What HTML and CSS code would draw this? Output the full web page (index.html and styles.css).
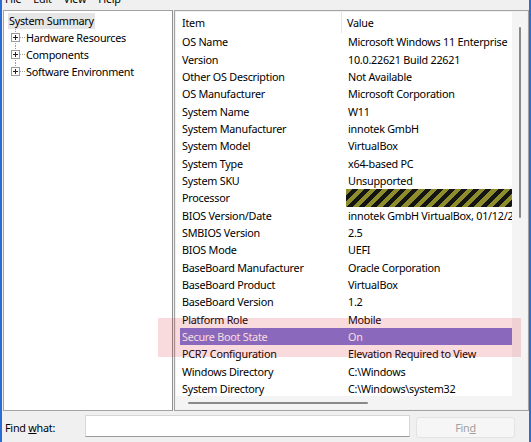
FILE: index.html
```html
<!DOCTYPE html>
<html>
<head>
<meta charset="utf-8">
<link rel="stylesheet" href="styles.css">
</head>
<body>
<div class="window">
  <div class="menubar">
    <span class="menu">File</span>
    <span class="menu">Edit</span>
    <span class="menu">View</span>
    <span class="menu">Help</span>
  </div>
  <div class="main">
    <div class="tree">
      <div class="root"><span class="root-label">System Summary</span></div>
      <div class="node">
        <span class="gutter"><svg class="plus" width="9" height="9" viewBox="0 0 9 9"><rect x="0.5" y="0.5" width="8" height="8" fill="#fff" stroke="#9a9a9a"/><path d="M2 4.5h5M4.5 2v5" stroke="#222" stroke-width="1"/></svg></span>
        <span class="hline"></span><span class="node-label">Hardware Resources</span>
      </div>
      <div class="node">
        <span class="gutter"><svg class="plus" width="9" height="9" viewBox="0 0 9 9"><rect x="0.5" y="0.5" width="8" height="8" fill="#fff" stroke="#9a9a9a"/><path d="M2 4.5h5M4.5 2v5" stroke="#222" stroke-width="1"/></svg></span>
        <span class="hline"></span><span class="node-label">Components</span>
      </div>
      <div class="node last">
        <span class="gutter"><svg class="plus" width="9" height="9" viewBox="0 0 9 9"><rect x="0.5" y="0.5" width="8" height="8" fill="#fff" stroke="#9a9a9a"/><path d="M2 4.5h5M4.5 2v5" stroke="#222" stroke-width="1"/></svg></span>
        <span class="hline"></span><span class="node-label">Software Environment</span>
      </div>
    </div>
    <div class="list">
      <div class="list-body">
        <div class="content">
          <div class="header">
            <div class="hcell first">Item</div>
            <div class="hcell">Value</div>
          </div>
          <div class="row"><div class="c1">OS Name</div><div class="c2">Microsoft Windows 11 Enterprise</div></div>
          <div class="row"><div class="c1">Version</div><div class="c2">10.0.22621 Build 22621</div></div>
          <div class="row"><div class="c1">Other OS Description</div><div class="c2">Not Available</div></div>
          <div class="row"><div class="c1">OS Manufacturer</div><div class="c2">Microsoft Corporation</div></div>
          <div class="row"><div class="c1">System Name</div><div class="c2">W11</div></div>
          <div class="row"><div class="c1">System Manufacturer</div><div class="c2">innotek GmbH</div></div>
          <div class="row"><div class="c1">System Model</div><div class="c2">VirtualBox</div></div>
          <div class="row"><div class="c1">System Type</div><div class="c2">x64-based PC</div></div>
          <div class="row"><div class="c1">System SKU</div><div class="c2">Unsupported</div></div>
          <div class="row"><div class="c1">Processor</div><div class="c2 hazard"></div></div>
          <div class="row"><div class="c1">BIOS Version/Date</div><div class="c2">innotek GmbH VirtualBox, 01/12/2006</div></div>
          <div class="row"><div class="c1">SMBIOS Version</div><div class="c2">2.5</div></div>
          <div class="row"><div class="c1">BIOS Mode</div><div class="c2">UEFI</div></div>
          <div class="row"><div class="c1">BaseBoard Manufacturer</div><div class="c2">Oracle Corporation</div></div>
          <div class="row"><div class="c1">BaseBoard Product</div><div class="c2">VirtualBox</div></div>
          <div class="row"><div class="c1">BaseBoard Version</div><div class="c2">1.2</div></div>
          <div class="row"><div class="c1">Platform Role</div><div class="c2">Mobile</div></div>
          <div class="row selected"><div class="c1">Secure Boot State</div><div class="c2">On</div></div>
          <div class="row"><div class="c1">PCR7 Configuration</div><div class="c2">Elevation Required to View</div></div>
          <div class="row"><div class="c1">Windows Directory</div><div class="c2">C:\Windows</div></div>
          <div class="row"><div class="c1">System Directory</div><div class="c2">C:\Windows\system32</div></div>
        </div>
        <div class="vscroll"><div class="vthumb"></div></div>
        <div class="hscroll"><div class="hthumb"></div></div>
        <div class="corner"></div>
      </div>
    </div>
  </div>
  <div class="findbar">
    <label class="find-label">Find <u>w</u>hat:</label>
    <div class="find-input"></div>
    <button class="find-btn" disabled>Fin<u>d</u></button>
  </div>
</div>
<div class="annotation"></div>
</body>
</html>
```

FILE: styles.css
```css
* { box-sizing: border-box; }
html, body { margin: 0; padding: 0; }
body {
  position: relative;
  width: 531px;
  height: 442px;
  overflow: hidden;
  background: #f0f0f0;
  font-family: "Noto Sans", "Open Sans", "DejaVu Sans", sans-serif;
  font-size: 10.8px;
  letter-spacing: -0.25px;
  color: #000;
}
.window {
  height: 442px;
  border-left: 2px solid #2b6bd4;
  border-right: 2px solid #2b6bd4;
  display: flex;
  flex-direction: column;
}
.menubar {
  height: 10px;
  display: flex;
  gap: 12px;
  padding-left: 3px;
}
.menu {
  line-height: 14px;
  margin-top: -8px;
}
.main {
  height: 401px;
  display: flex;
  gap: 1px;
  padding-left: 1px;
}
.tree {
  width: 170px;
  height: 401px;
  background: #fff;
  border: 1px solid #a3a3a3;
  border-right-color: #8f8f8f;
  padding: 2px 0 0 4px;
}
.root {
  height: 16px;
  display: flex;
}
.root-label {
  background: #e5e5e5;
  padding: 0 1px;
  line-height: 16px;
}
.node {
  height: 17px;
  display: flex;
  align-items: center;
  padding-left: 3px;
}
.gutter {
  width: 9px;
  height: 17px;
  display: flex;
  align-items: center;
  justify-content: center;
  background: repeating-linear-gradient(to bottom, #a0a0a0 0 1px, transparent 1px 2px) no-repeat center top / 1px 100%;
}
.node.last .gutter {
  background-size: 1px 50%;
}
.plus { display: block; }
.hline {
  width: 5px;
  height: 1px;
  background: repeating-linear-gradient(to right, #a0a0a0 0 1px, transparent 1px 2px);
}
.node-label {
  padding-left: 1px;
  line-height: 17px;
  white-space: nowrap;
}
.list {
  width: 355px;
  height: 401px;
  border: 1px solid #a3a3a3;
  padding: 1px;
  background: #f0f0f0;
}
.list-body {
  height: 397px;
  display: grid;
  grid-template-columns: 336px 15px;
  grid-template-rows: 384px 13px;
}
.content {
  background: #fff;
  overflow: hidden;
}
.header {
  height: 21.3px;
  display: grid;
  grid-template-columns: 166px 1fr;
}
.hcell {
  line-height: 21px;
  padding-left: 5px;
}
.hcell.first {
  padding-left: 6px;
  border-right: 1px solid #e5e5e5;
}
.row {
  height: 17.35px;
  margin-left: 4px;
  display: grid;
  grid-template-columns: 162px 1fr;
  line-height: 17.35px;
  white-space: nowrap;
}
.c1 { padding-left: 2px; overflow: hidden; }
.c2 { padding-left: 6px; overflow: hidden; }
.c2.hazard {
  margin-left: 4px;
  background: repeating-linear-gradient(135deg, #8d8d2c 0 4.3px, #141414 4.3px 8.6px);
}
.row.selected {
  background: #7a78d8;
  color: #fff;
}
.vscroll {
  background: #f4f4f4;
  padding: 15px 0 0 7px;
}
.vthumb {
  width: 2px;
  height: 191px;
  background: #8a8a8a;
  border-radius: 1px;
}
.hscroll {
  background: #f4f4f4;
  padding: 6px 0 0 12px;
}
.hthumb {
  width: 180px;
  height: 2px;
  background: #8a8a8a;
  border-radius: 1px;
}
.corner { background: #f4f4f4; }
.findbar {
  flex: 1;
  display: flex;
  align-items: flex-start;
  padding-left: 3px;
}
.find-label {
  width: 80px;
  line-height: 17px;
  margin-top: 8px;
}
.find-input {
  width: 325px;
  height: 22px;
  margin-top: 4px;
  background: #fff;
  border: 1px solid #d6d6d6;
  border-bottom-color: #9a9a9a;
}
.find-btn {
  width: 99px;
  height: 21px;
  margin-top: 6px;
  margin-left: 6px;
  background: #f6f6f6;
  border: 1px solid #e3e3e3;
  border-radius: 3px;
  font-family: inherit;
  font-size: 10.8px;
  letter-spacing: -0.25px;
  color: #a0a0a0;
  padding: 0;
}
.annotation {
  position: absolute;
  left: 158px;
  top: 318px;
  width: 363px;
  height: 39px;
  background: rgba(225, 30, 45, 0.16);
  pointer-events: none;
}
```
